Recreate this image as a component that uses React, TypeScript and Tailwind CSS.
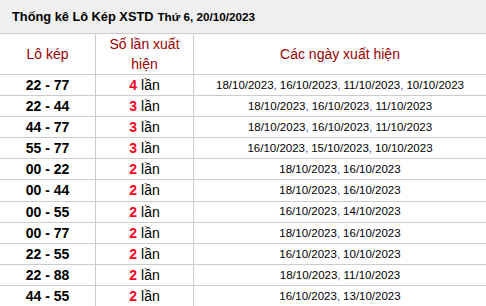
const rows: [string, number, string[]][] = [
  ["22 - 77", 4, ["18/10/2023", "16/10/2023", "11/10/2023", "10/10/2023"]],
  ["22 - 44", 3, ["18/10/2023", "16/10/2023", "11/10/2023"]],
  ["44 - 77", 3, ["18/10/2023", "16/10/2023", "11/10/2023"]],
  ["55 - 77", 3, ["16/10/2023", "15/10/2023", "10/10/2023"]],
  ["00 - 22", 2, ["18/10/2023", "16/10/2023"]],
  ["00 - 44", 2, ["18/10/2023", "16/10/2023"]],
  ["00 - 55", 2, ["16/10/2023", "14/10/2023"]],
  ["00 - 77", 2, ["18/10/2023", "16/10/2023"]],
  ["22 - 55", 2, ["16/10/2023", "10/10/2023"]],
  ["22 - 88", 2, ["18/10/2023", "11/10/2023"]],
  ["44 - 55", 2, ["16/10/2023", "13/10/2023"]],
];

export default function App() {
  return (
    <div className="w-[486px] h-[306px] overflow-hidden bg-white font-['Liberation_Sans',Arial,sans-serif] text-black">
      <div className="h-[34px] flex items-center pl-3 bg-[#efefef] border-b border-[#cccccc] font-bold">
        <span className="text-[12.8px]">Thống kê Lô Kép XSTD</span>
        <span className="text-[11.7px] ml-1">Thứ 6, 20/10/2023</span>
      </div>
      <div className="grid grid-cols-[96px_98px_1fr] h-[41px] border-b border-[#cccccc] text-[14px] text-[#9b0000]">
        <div className="flex items-center justify-center border-r border-[#cccccc]">Lô kép</div>
        <div className="flex items-center justify-center text-center leading-[20px] border-r border-[#cccccc] px-2">
          Số lần xuất hiện
        </div>
        <div className="flex items-center justify-center">Các ngày xuất hiện</div>
      </div>
      {rows.map(([pair, n, dates]) => (
        <div key={pair} className="grid grid-cols-[96px_98px_1fr] h-[21.1px] border-b border-[#cccccc]">
          <div className="flex items-center justify-center border-r border-[#cccccc] font-bold text-[14px]">{pair}</div>
          <div className="flex items-center justify-center border-r border-[#cccccc] text-[14px]">
            <span className="font-bold text-[#ff0022]">{n}</span>
            <span className="ml-1">lần</span>
          </div>
          <div className="flex items-center justify-center text-[11.5px]">
            {dates.map((d, i) => (
              <span key={i}>
                {d}
                {i < dates.length - 1 && <span className="text-[#5a3fd0] mr-[3px]">,</span>}
              </span>
            ))}
          </div>
        </div>
      ))}
    </div>
  );
}
